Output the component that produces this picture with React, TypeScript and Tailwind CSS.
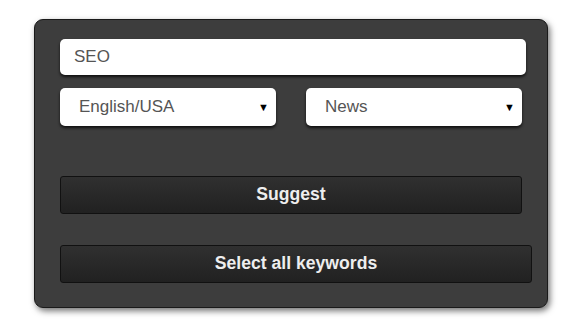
import React from "react";

export default function App() {
  const font = { fontFamily: '"Liberation Sans", Arial, Helvetica, sans-serif' };
  return (
    <div className="w-[588px] h-[327px] bg-white" style={font}>
      <div className="ml-[34px] pt-[19px]">
        <div className="w-[514px] h-[289px] bg-[#3d3d3d] border border-[#1a1a1a] rounded-[9px] shadow-[2px_3px_6px_rgba(0,0,0,0.55)] pl-[25px] pt-[19px] flex flex-col">
          <div className="w-[466px] h-[36px] bg-white rounded-[5px] shadow-[0_2px_3px_rgba(0,0,0,0.75)] flex items-center pl-[14px] text-[17px] text-[#555]">
            SEO
          </div>
          <div className="flex gap-[30px] mt-[13px]">
            <div className="w-[216px] h-[38px] bg-white rounded-[5px] shadow-[0_2px_3px_rgba(0,0,0,0.75)] flex items-center justify-between pl-[19px] pr-[7px] text-[17px] text-[#555]">
              <span>English/USA</span>
              <span className="text-[11px] text-black">▼</span>
            </div>
            <div className="w-[216px] h-[38px] bg-white rounded-[5px] shadow-[0_2px_3px_rgba(0,0,0,0.75)] flex items-center justify-between pl-[19px] pr-[7px] text-[17px] text-[#555]">
              <span>News</span>
              <span className="text-[11px] text-black">▼</span>
            </div>
          </div>
          <div className="w-[462px] h-[38px] mt-[50px] pb-[2px] rounded-[3px] border border-[#111] bg-gradient-to-b from-[#303030] to-[#212121] flex items-center justify-center text-[17.6px] font-bold text-[#eee]">
            Suggest
          </div>
          <div className="w-[472px] h-[38px] mt-[31px] pb-[2px] rounded-[3px] border border-[#111] bg-gradient-to-b from-[#303030] to-[#212121] flex items-center justify-center text-[17.6px] font-bold text-[#eee]">
            Select all keywords
          </div>
        </div>
      </div>
    </div>
  );
}
